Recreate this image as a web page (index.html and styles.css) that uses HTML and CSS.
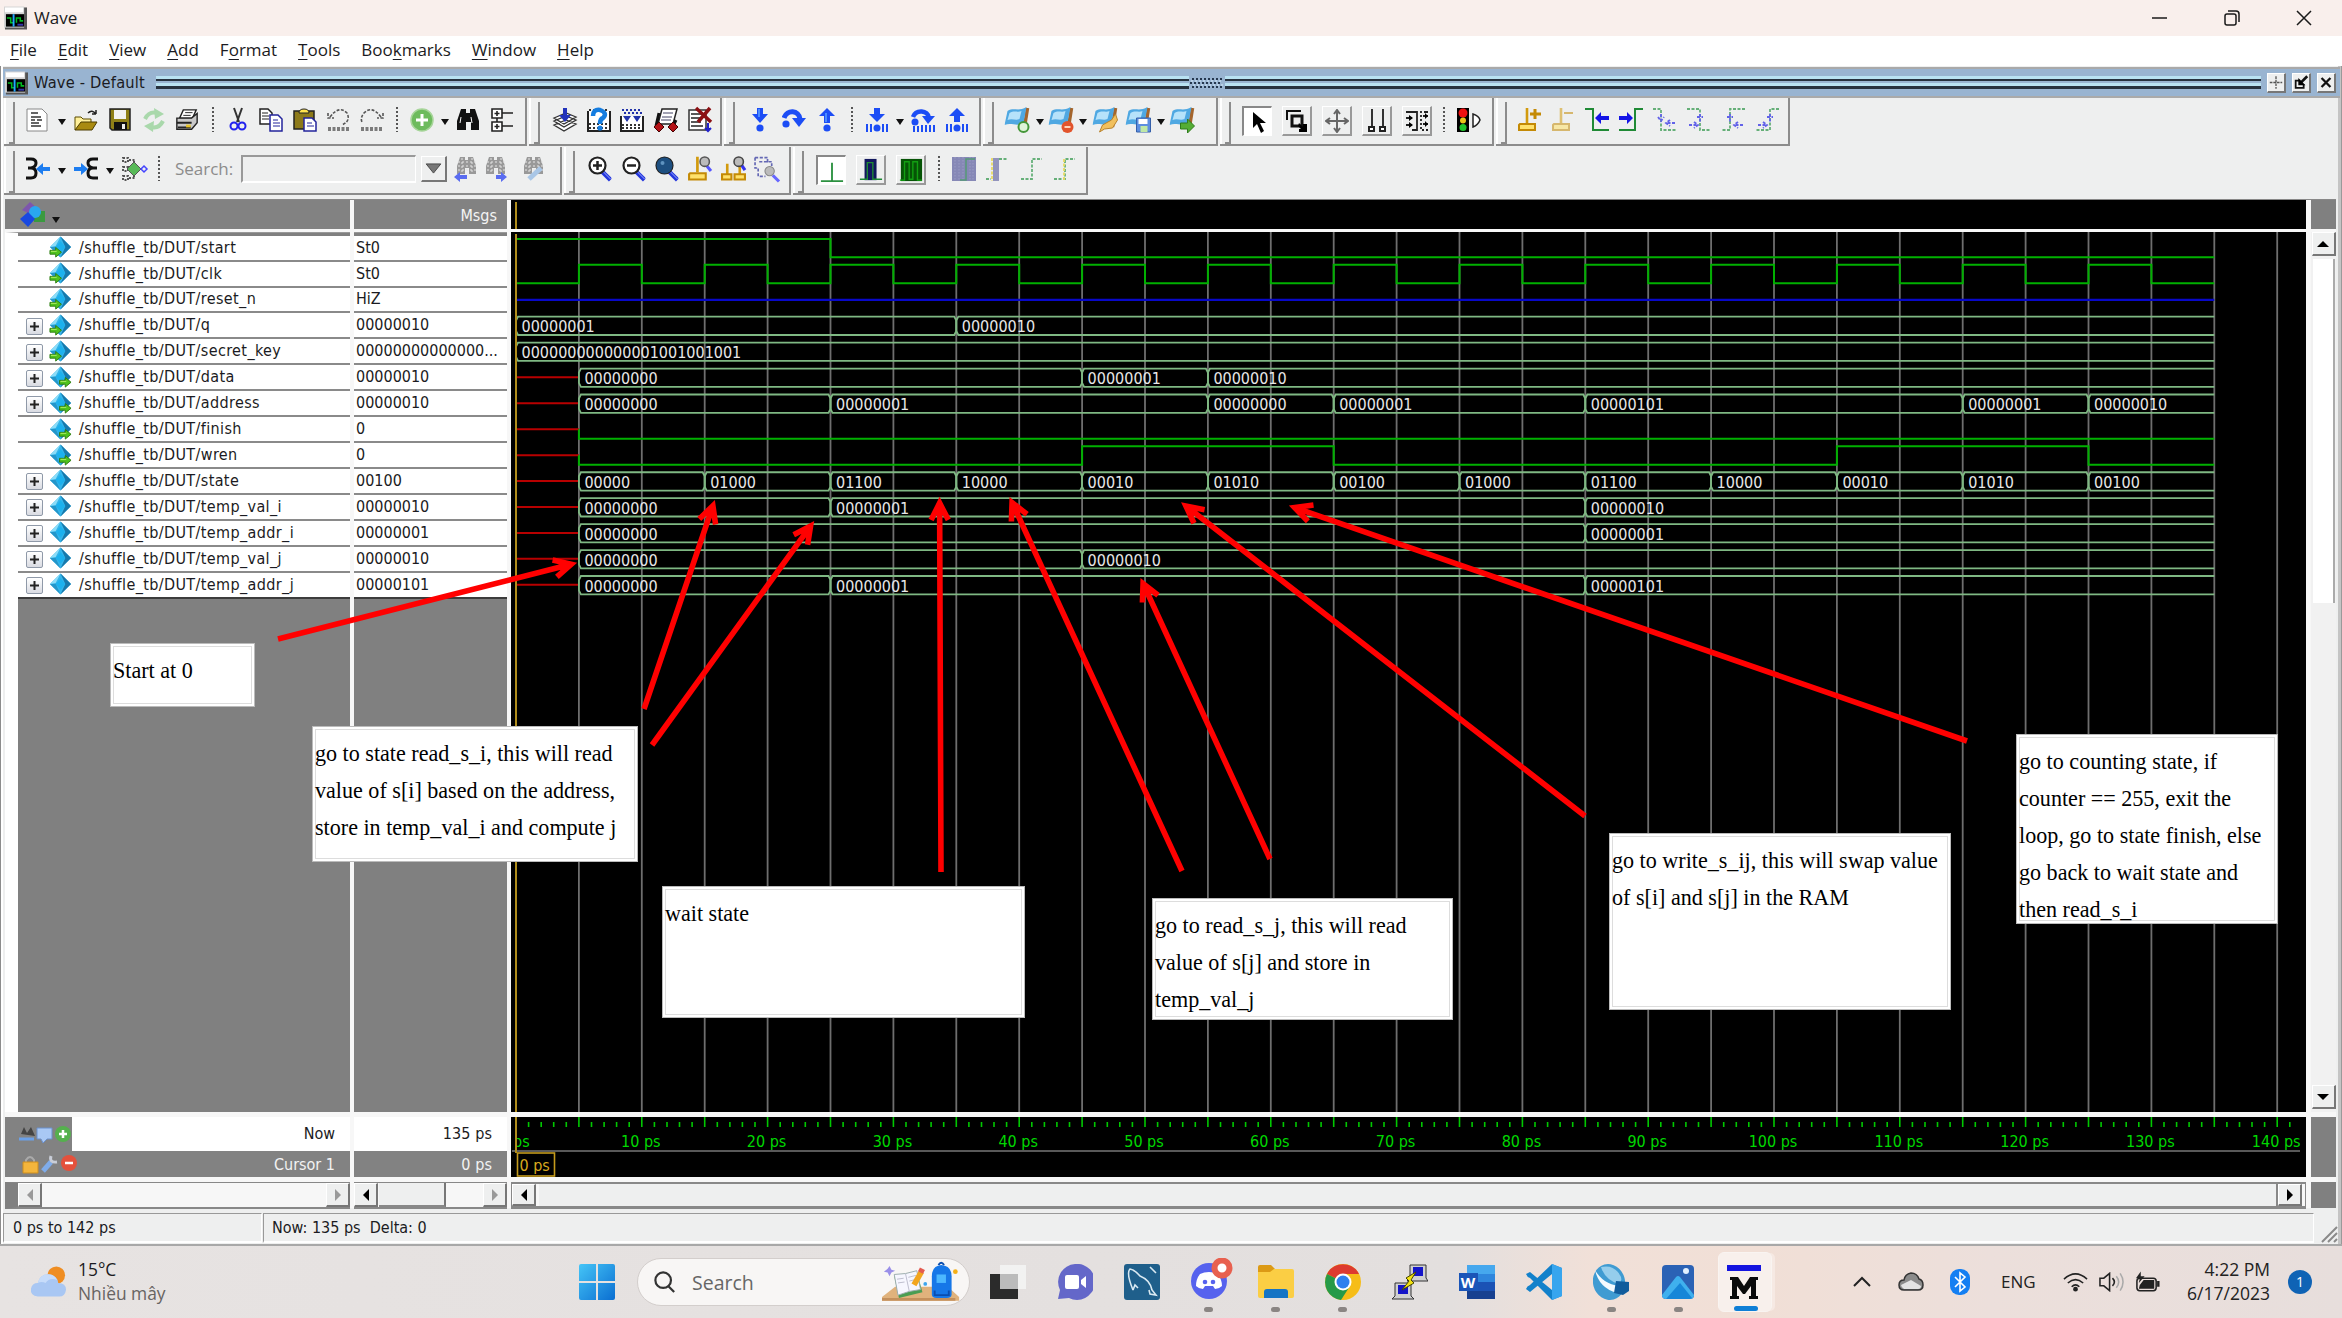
FILE: index.html
```html
<!DOCTYPE html>
<html lang="en">
<head>
<meta charset="utf-8">
<title>Wave</title>
<link rel="stylesheet" href="styles.css">
</head>
<body>
<svg class="defs" aria-hidden="true">
  <symbol id="app" viewBox="0 0 24 24"><path fill="#555" d="M1 1h23v23H1z"/><path fill="#d4d4d4" d="M0 0h21v22H0z"/><path fill="#fff" d="M1 1h19v5H1z"/><path fill="#000" d="M2 8h19v13H2z"/><path d="M3 12h4v5h3M13 17v-5h4v3h3" fill="none" stroke="#0b2" stroke-width="1.6"/><path d="M10 8v13" stroke="#2af" stroke-width="2"/><path d="M14 19h6" stroke="#33a" stroke-width="2"/></symbol>
  <symbol id="caret" viewBox="0 0 10 8"><path fill="#111" d="M1 1h8L5 7z"/></symbol>
  <symbol id="gem" viewBox="0 0 24 24"><path fill="#35b5ea" d="M12 1 1 12l11 11 11-11z"/><path fill="#1779ac" d="m12 1 11 11-11 11 5-11z"/><path fill="#8bdcf8" d="M12 1 1 12l6-1z"/><path fill="#2496ca" d="m1 12 11 11-5-11z"/><path fill="#1cb1ee" d="m12 6 5 6-5 6-5-6z"/></symbol>
  <symbol id="garrow" viewBox="0 0 14 12"><path fill="#4fc21c" stroke="#2d7d12" stroke-width="1" d="M1 4h6V1l6 5-6 5V8H1z"/><path stroke="#b6f06a" d="M2 5h6"/></symbol>
  <symbol id="down" viewBox="0 0 24 24"><path fill="#1c4df5" d="M9 0h6v6h5l-8 9-8-9h5z"/><path fill="#4b8cff" d="M10 1h2v8h-2z"/><circle cx="12" cy="20" r="3.6" fill="#1c4df5"/></symbol>
  <symbol id="up" viewBox="0 0 24 24"><path fill="#1c4df5" d="M12 0l8 8h-5v7H9V8H4z"/><path fill="#4b8cff" d="M10 5h2v9h-2z"/><circle cx="12" cy="20" r="3.6" fill="#1c4df5"/></symbol>
  <symbol id="over" viewBox="0 0 24 24"><path fill="none" stroke="#1c4df5" stroke-width="5" d="M2 10C5 1 17 2 18 11"/><path fill="#1c4df5" d="M10 10h14l-7 9z"/><circle cx="4" cy="16" r="3.6" fill="#1c4df5"/></symbol>
  <symbol id="bars" viewBox="0 0 24 8"><path stroke="#1c4df5" stroke-width="2" d="M2 0v8M6 0v8M18 0v8M22 0v8"/><circle cx="12" cy="4" r="3.5" fill="#1c4df5"/></symbol>
  <symbol id="flag" viewBox="0 0 26 26"><path stroke="#a4652c" stroke-width="3.500" d="m23 1-3 19"/><path fill="#4fa8e2" d="M3 4c6-4 11 1 19-4l-3 16c-7 4-12-1-19 2z"/><path fill="#b6e2fa" d="M5 6c5-3 8 0 12-2l-2 8c-4 2-7-1-12 1z"/></symbol>
  <symbol id="binoc" viewBox="0 0 24 24"><path fill="#111" d="M5 1h5v4h4V1h5l4 12v9h-8v-8h-5v8H1v-9z"/><path stroke="#fff" d="M5 9 4 15M15 9l1 6"/></symbol>
  <symbol id="binocg" viewBox="0 0 24 24"><path fill="#999" d="M6 0h5v3h3V0h5l3 9v8h-7v-6h-4v6H3V9z"/><path stroke="#e5e5e5" stroke-dasharray="2 2" d="M4 5h18M4 9h18M4 13h18M8 1v14M18 1v14"/></symbol>
  <symbol id="lens" viewBox="0 0 24 26"><path stroke="#2436dc" stroke-width="4.5" d="m15 16 8 8"/><path stroke="#98a8ff" d="m16 16 7 7"/><circle cx="10" cy="9.500" r="8" fill="#fff" stroke="#222" stroke-width="2.2"/></symbol>
  <symbol id="anchor" viewBox="0 0 24 24"><path stroke="#d29a0d" stroke-width="2.6" d="M10 0v15"/><path fill="#ffe16a" stroke="#c48a05" stroke-width="2" d="M3 16h15v6H2v-5z"/></symbol>
  <symbol id="lefta" viewBox="0 0 14 14"><path fill="#1414e6" d="M0 7l6-6v4h8v4H6v4z"/></symbol>
</svg>

<div class="window">
  <header class="title"><svg class="appic"><use href="#app"/></svg><span>Wave</span>
    <div class="winbtns">
      <svg viewBox="0 0 16 16"><path d="M0 8h15"/></svg>
      <svg viewBox="0 0 16 16"><rect x="1" y="4" width="11" height="11" rx="2"/><path d="M4 1h8q3 0 3 3v8"/></svg>
      <svg viewBox="0 0 16 16"><path d="m1 1 14 14M15 1 1 15"/></svg>
    </div>
  </header>
  <nav class="menu"><span><u>F</u>ile</span><span><u>E</u>dit</span><span><u>V</u>iew</span><span><u>A</u>dd</span><span>F<u>o</u>rmat</span><span><u>T</u>ools</span><span>Boo<u>k</u>marks</span><span><u>W</u>indow</span><span><u>H</u>elp</span></nav>

  <div class="dock">
    <svg class="appic"><use href="#app"/></svg><span class="docktitle">Wave - Default</span>
    <i class="rails"></i><svg class="grab" viewBox="0 0 34 12"><path stroke="#26384f" stroke-width="2" stroke-dasharray="2 2" d="M2 2h32M0 6h32M2 10h32"/><path stroke="#d8efff" stroke-width="1" stroke-dasharray="2 2" d="M1 4h32M3 8h31"/></svg><i class="rails"></i>
    <div class="dockbtns">
      <svg viewBox="0 0 18 18"><path stroke="#555" stroke-width="1.500" d="M9 2v14M2 9h14" stroke-dasharray="3 1"/></svg>
      <svg viewBox="0 0 18 18"><path fill="none" stroke="#111" stroke-width="2" d="M8 7H3v8h9v-4"/><path stroke="#111" stroke-width="3" d="m16 2-8 8"/><path d="M6 4v8h8z"/></svg>
      <svg viewBox="0 0 18 18"><path stroke="#111" stroke-width="2.600" d="m4 4 10 10M14 4 4 14"/></svg>
    </div>
  </div>

  <div class="toolrow">
    <div class="tb t1">
      <svg class="ic" viewBox="0 0 24 24"><path fill="#fff" stroke="#888" d="M2 1h15l5 5v17H2z"/><path stroke="#333" stroke-width="1.500" d="M6 5h7M6 9h10M6 12h4m2 0h5M6 15h8M6 18h10"/></svg>
      <svg class="ct"><use href="#caret"/></svg>
      <svg class="ic" viewBox="0 0 24 24"><path d="M14 5q4-4 8 1m0 0V2m0 4h-4" fill="none" stroke="#222" stroke-width="1.500"/><path fill="#fff09a" stroke="#5b4a00" d="M1 22V9h6l2 2h8v4"/><path fill="#a98a10" stroke="#4c3c00" d="m1 22 6-8h16l-5 8z"/></svg>
      <svg class="ic" viewBox="0 0 24 24"><path fill="#8f8018" stroke="#222" stroke-width="1.500" d="M2 1h20v21H4l-2-2z"/><path fill="#f2f2f2" d="M6 2h12v9H6z"/><path fill="#111" d="M6 14h13v8H6z"/><path fill="#eee" d="M14 16h3v5h-3z"/></svg>
      <svg class="ic" viewBox="0 0 24 24"><path fill="none" stroke="#a9d8ab" stroke-width="4" d="M3 11q4-8 12-6M21 13q-4 8-12 6"/><path fill="#a9d8ab" d="m12 0 10 6-9 5zM12 13 2 18l9 6z"/></svg>
      <svg class="ic" viewBox="0 0 26 24"><path fill="#fff" stroke="#222" stroke-width="1.500" d="M9 1h14l-4 9H5z"/><path stroke="#222" d="M11 4h8M9 7h8"/><path fill="#c9c9c9" stroke="#222" stroke-width="1.500" d="M2 10h16l6-5v10l-6 7H2z"/><path stroke="#222" stroke-width="2" d="M2 15h16M3 20h14"/><path fill="#e8c42a" d="M12 17h5v3h-5z"/></svg>
      <i class="sp"></i>
      <svg class="ic" viewBox="0 0 24 24"><path stroke="#333" stroke-width="2" d="m8 0 5 14M16 0l-5 14"/><circle cx="8" cy="18" r="3.500" fill="none" stroke="#22e" stroke-width="2"/><circle cx="16" cy="18" r="3.500" fill="none" stroke="#22e" stroke-width="2"/></svg>
      <svg class="ic" viewBox="0 0 24 24"><path fill="#fff" stroke="#222" stroke-width="1.500" d="M1 1h8l4 4v11H1z"/><path stroke="#222" d="M3 5h6M3 8h7M3 11h7"/><path fill="#fff" stroke="#23259c" stroke-width="1.500" d="M11 7h8l4 4v12H11z"/><path stroke="#23259c" d="M14 12h5M14 15h7M14 18h7"/></svg>
      <svg class="ic" viewBox="0 0 24 24"><path fill="#8d7a1a" stroke="#222" stroke-width="1.500" d="M1 3h20v18H1z"/><path fill="#ffe34d" stroke="#222" d="M6 5q0-4 5-4t5 4z"/><path fill="#fff" stroke="#23259c" stroke-width="1.500" d="M11 10h8l4 4v9H11z"/><path stroke="#23259c" d="M14 15h5M14 18h7"/></svg>
      <svg class="ic" viewBox="0 0 24 24"><path fill="none" stroke="#555" stroke-width="1.600" stroke-dasharray="3 1.500" d="M1 5v5h6M3 9Q12-3 20 5q4 8-5 12M1 20h22M1 22h22"/></svg>
      <svg class="ic" viewBox="0 0 24 24"><path fill="none" stroke="#555" stroke-width="1.600" stroke-dasharray="3 1.500" d="M23 5v5h-6M21 9Q12-3 4 5 0 10 2 14M1 20h22M1 22h22"/></svg>
      <i class="sp"></i>
      <svg class="ic" viewBox="0 0 24 24"><circle cx="12" cy="12" r="11" fill="#6dbb5d" stroke="#a7d59a" stroke-width="1.500"/><path stroke="#fff" stroke-width="3" d="M12 6v12M6 12h12"/></svg>
      <svg class="ct near"><use href="#caret"/></svg>
      <svg class="ic"><use href="#binoc"/></svg>
      <svg class="ic" viewBox="0 0 24 24"><path fill="#fff" stroke="#222" stroke-width="1.600" d="M2 1h10v9H2zM2 14h10v9H2z"/><path stroke="#222" stroke-width="1.600" d="M7 3v5M4.500 5.500h5M7 16v5M4.500 18.500h5M12 5h11M12 18h11M7 10v4"/></svg>
    </div>
    <div class="tb t2">
      <svg class="ic" viewBox="0 0 24 24"><path fill="#fff" stroke="#333" stroke-width="1.300" d="m1 17 12-5 10 4-12 7zM1 13l12-5 10 4-12 7zM1 10l12-5 10 4-12 7z"/><path fill="#23b" d="M10 0h4v7h4l-6 7-6-7h4z"/></svg>
      <svg class="ic" viewBox="0 0 24 24"><path fill="#fff" stroke="#222" stroke-width="2" d="M1 3v20h22V3"/><path stroke="#333" stroke-dasharray="2 2" stroke-width="2" d="M2 16h20M2 20h20M2 2h20"/><path fill="none" stroke="#157de0" stroke-width="4.500" d="M6 8q0-7 7-6 8 3 3 8-3 1-3 6"/><circle cx="13" cy="20" r="2.600" fill="#157de0"/></svg>
      <svg class="ic" viewBox="0 0 24 24"><path fill="#fff" stroke="#222" stroke-width="2" d="M1 8v15h22V8"/><path stroke="#333" stroke-dasharray="2 2" stroke-width="2" d="M2 17h20M2 20h20"/><path stroke="#23a" stroke-dasharray="2 2" stroke-width="2" d="M2 2h20M4 5h18"/><path fill="#23a" d="m3 8 4 6 4-6zM13 8l4 6 4-6z"/></svg>
      <svg class="ic" viewBox="0 0 24 24"><path fill="#fff" stroke="#222" stroke-width="1.500" d="M8 1h15l-4 15H4z"/><path stroke="#446" d="M9 5h10M8 9h10M7 12h10"/><path stroke="#111" stroke-width="3" d="M2 18 5 5M18 20l4-8"/><path fill="#b31217" stroke="#400" d="m5 14 5 5-5 5-5-5zM19 14l5 5-5 5-5-5z"/></svg>
      <svg class="ic" viewBox="0 0 24 24"><path fill="#fff" stroke="#333" stroke-width="1.500" d="M1 2h17v20H1z"/><path stroke="#222" stroke-width="1.500" d="M3 6h12M3 10h12M3 14h10M3 18h12"/><path stroke="#8c1013" stroke-width="3.500" d="m8 0 15 14M22 0 10 14"/><path stroke="#22c" stroke-width="2" d="M20 15v8m-3-3 3 3 3-3"/></svg>
    </div>
    <div class="tb t3">
      <svg class="ic"><use href="#down"/></svg><svg class="ic"><use href="#over"/></svg><svg class="ic"><use href="#up"/></svg>
      <i class="sp"></i>
      <svg class="ic" viewBox="0 0 24 24"><path fill="#1c4df5" d="M9 0h6v6h5l-8 8-8-8h5z"/><use href="#bars" y="16" width="24" height="8"/></svg>
      <svg class="ct near"><use href="#caret"/></svg>
      <svg class="ic" viewBox="0 0 24 24"><path fill="none" stroke="#1c4df5" stroke-width="4.500" d="M2 9C5 1 17 2 18 10"/><path fill="#1c4df5" d="M11 8h13l-7 8z"/><circle cx="4" cy="14" r="3.500" fill="#1c4df5"/><path stroke="#1c4df5" stroke-width="2" d="M3 18v6M7 18v6M11 17v7M15 17v7M19 17v7M23 17v7"/></svg>
      <svg class="ic" viewBox="0 0 24 24"><path fill="#1c4df5" d="m12 0 8 8h-5v6H9V8H4z"/><use href="#bars" y="16" width="24" height="8"/></svg>
    </div>
    <div class="tb t4">
      <svg class="ic" viewBox="0 0 26 26"><use href="#flag" width="26" height="26"/><circle cx="19" cy="20" r="5" fill="#dff4d8" stroke="#45973a" stroke-width="2"/></svg><svg class="ct"><use href="#caret"/></svg>
      <svg class="ic" viewBox="0 0 26 26"><use href="#flag" width="26" height="26"/><circle cx="19" cy="20" r="6" fill="#e2542c"/><path stroke="#ffd2b8" stroke-width="2" d="M16 20h6"/></svg><svg class="ct"><use href="#caret"/></svg>
      <svg class="ic" viewBox="0 0 26 26"><use href="#flag" width="26" height="26"/><path fill="#f1c05d" stroke="#b9832e" d="m7 25 3-7 9-5 4-6 2 6-5 8-8 1z"/></svg>
      <svg class="ic" viewBox="0 0 26 26"><use href="#flag" width="26" height="26"/><path fill="#5d8fe0" stroke="#3560aa" d="M11 11h14v14H11z"/><path fill="#fff" d="M13 12h9v5h-9z"/><path fill="#bfe8a6" d="M15 19h7v6h-7z"/></svg><svg class="ct"><use href="#caret"/></svg>
      <svg class="ic" viewBox="0 0 26 26"><use href="#flag" width="26" height="26"/><path fill="#54ad35" stroke="#2f7d1c" d="M11 16h7v-4l7 7-7 7v-4h-7z"/></svg>
    </div>
    <div class="tb t5">
      <span class="bt on"><svg viewBox="0 0 24 24"><path d="M7 2v16l4-4 4 9 3-2-4-8h6z"/></svg></span>
      <span class="bt"><svg viewBox="0 0 24 24"><path fill="none" stroke="#111" stroke-width="2" d="M2 11V2h14"/><path fill="none" stroke="#111" stroke-width="3" d="M7 7h10v10H7z"/><path d="m14 14 4 4v-3h4v8h-8v-3h2l-3-3z"/></svg></span>
      <span class="bt"><svg viewBox="0 0 24 24"><path fill="none" stroke="#666" stroke-width="2" d="M12 2v20M2 12h20M9 5l3-4 3 4M9 19l3 4 3-4M5 9l-4 3 4 3M19 9l4 3-4 3"/></svg></span>
      <span class="bt"><svg viewBox="0 0 24 24"><path stroke="#333" stroke-width="2" d="M7 0v19M18 0v19"/><path fill="#fff" stroke="#222" stroke-width="2" d="M4 18h5v4H4zM15 18h5v4h-5z"/></svg></span>
      <span class="bt"><svg viewBox="0 0 24 24"><path fill="none" stroke="#222" stroke-width="1.800" d="M1 3h11v18H7M23 3h-4"/><path fill="none" stroke="#222" stroke-width="1.800" stroke-dasharray="2 2" d="M16 2v19h7"/><path stroke="#222" stroke-width="2" d="M1 9h6M1 16h6M18 7h5M18 15h5"/><path d="m4 6 4 3-4 3zM4 13l4 3-4 3zM20 4l3 3-3 3zM20 12l3 3-3 3z"/></svg></span>
      <i class="sp"></i>
      <svg class="ic" viewBox="0 0 24 24"><path d="M1 0h12v24H1z"/><circle cx="7" cy="5" r="4.500" fill="#f01010"/><circle cx="7" cy="12.500" r="3" fill="#e9c51c"/><circle cx="7" cy="19.500" r="3.500" fill="#1fc42b"/><path fill="#fff" stroke="#222" stroke-width="1.500" d="M17 6q6 2 7 6-2 5-7 7z"/></svg>
    </div>
    <div class="tb t6">
      <svg class="ic" viewBox="0 0 24 24"><use href="#anchor" width="24" height="24"/><path stroke="#c48a05" stroke-width="3" d="M18 1v10M13 6h11"/></svg>
      <svg class="ic pale" viewBox="0 0 24 24"><use href="#anchor" width="24" height="24"/><path stroke="#c48a05" stroke-width="2" d="M13 5h9"/></svg>
      <svg class="ic" viewBox="0 0 24 24"><path fill="none" stroke="#1f8a35" stroke-width="2" d="M0 1h8v21h16"/><use href="#lefta" x="10" y="3" width="14" height="14"/></svg>
      <svg class="ic" viewBox="0 0 24 24"><path fill="none" stroke="#1f8a35" stroke-width="2" d="M24 1h-8v21H0"/><path fill="#1414e6" d="m14 10-6-6v4H0v4h8v4z"/></svg>
      <svg class="ic dash" viewBox="0 0 24 24"><path d="M0 1h8v21h16"/><path class="b" d="M8 6v6m-3-3 3 4 3-4M22 15h-9m4-3-4 3 4 3"/></svg>
      <svg class="ic dash" viewBox="0 0 24 24"><path d="M0 1h13v21h11"/><path class="b" d="M13 6v8m-3-5h6M2 17h9m-4-3 4 3-4 3"/></svg>
      <svg class="ic dash" viewBox="0 0 24 24"><path d="M24 1H9v21H0"/><path class="b" d="M9 6v8M6 9h6M22 17h-9m4-3-4 3 4 3"/></svg>
      <svg class="ic dash" viewBox="0 0 24 24"><path d="M24 1h-9v21H0"/><path class="b" d="M15 6v8m-3-5h6M3 17h9m-4-3 4 3-4 3"/></svg>
    </div>
  </div>
  <div class="toolrow">
    <div class="tb s1">
      <svg class="ic" viewBox="0 0 24 24"><path fill="none" stroke="#111" stroke-width="3" d="M0 2h5q5 0 5 4t-5 5H2h3q5 0 5 5t-5 5H0"/><path fill="#1d7df0" d="m10 12 7-6v4h7v4h-7v4z"/></svg>
      <svg class="ct"><use href="#caret"/></svg>
      <svg class="ic" viewBox="0 0 24 24"><path fill="none" stroke="#111" stroke-width="3" d="M24 2h-5q-5 0-5 4t5 5h4-4q-5 0-5 5t5 5h5"/><path fill="#1d7df0" d="m14 12-7-6v4H0v4h7v4z"/></svg>
      <svg class="ct"><use href="#caret"/></svg>
      <svg class="ic" viewBox="0 0 24 24"><path stroke="#555" stroke-width="2" stroke-dasharray="2 1.500" fill="none" d="M1 1h5v4H1zM1 10h5v4H1zM1 19h5v4H1zM7 3h6M7 21h6M12 4v16"/><path fill="#57b957" stroke="#555" d="m12 5 7 7-7 7-7-7z"/><path fill="none" stroke="#44f" stroke-width="1.500" d="m22 9 3 3-3 3-3-3z"/></svg>
      <i class="sp"></i>
      <label>Search:</label><span class="field"></span><span class="drop"><svg viewBox="0 0 18 12"><path fill="#777" stroke="#444" d="M1 1h16L9 11z"/></svg></span>
      <svg class="ic a" viewBox="0 0 24 24"><use href="#binocg" width="24" height="24"/><path fill="#5a6cf0" d="m0 20 6-5v3h7v4H6v3z"/></svg>
      <svg class="ic b" viewBox="0 0 24 24"><use href="#binocg" width="24" height="24"/><path fill="#5a6cf0" d="m24 20-6-5v3h-5v4h5v3z"/></svg>
      <svg class="ic c" viewBox="0 0 24 24"><use href="#binocg" width="24" height="24"/><path stroke="#a9c6e6" stroke-width="5" d="m8 22 12-11"/></svg>
    </div>
    <div class="tb s2">
      <svg class="ic" viewBox="0 0 24 26"><use href="#lens" width="24" height="26"/><path stroke="#222" stroke-width="2.500" d="M10 5v9M5.500 9.500h9"/></svg>
      <svg class="ic" viewBox="0 0 24 26"><use href="#lens" width="24" height="26"/><path stroke="#222" stroke-width="2.500" d="M5.500 9.500h9"/></svg>
      <svg class="ic" viewBox="0 0 24 26"><use href="#lens" width="24" height="26"/><circle cx="10" cy="9.500" r="8" fill="#1d4f80"/><circle cx="8" cy="7" r="2" fill="#5f93c0"/></svg>
      <svg class="ic" viewBox="0 0 24 24"><use href="#anchor" width="24" height="24"/><path stroke="#55f" stroke-width="3" d="m19 9 4 5"/><circle cx="17" cy="5" r="4.500" fill="#bbb" stroke="#555" stroke-width="1.500"/></svg>
      <svg class="ic" viewBox="0 0 24 24"><path stroke="#d29a0d" stroke-width="2.500" d="M6 7v10M18 8v9"/><path fill="#ffe16a" stroke="#c48a05" stroke-width="2" d="M1 17h9v5H1zM13 17h10v5H13z"/><path stroke="#33e" stroke-width="3" d="m19 7 4 6"/><circle cx="17" cy="5" r="4.500" fill="#bbb" stroke="#444" stroke-width="1.500"/></svg>
      <svg class="ic" viewBox="0 0 24 24"><path fill="none" stroke="#6468b4" stroke-width="1.600" stroke-dasharray="3 1.500" d="M1 1h12v4h4M1 1v10h3v8h7M5 5h12v4"/><path stroke="#66f" stroke-width="3" d="m18 18 6 6"/><circle cx="15" cy="14" r="4.500" fill="#bbb" stroke="#888"/></svg>
    </div>
    <div class="tb s3">
      <span class="bt on"><svg viewBox="0 0 26 26"><path stroke="#2b9140" stroke-width="2" d="M13 4v20M1 24h24"/></svg></span>
      <span class="bt"><svg viewBox="0 0 26 26"><path fill="#12185e" d="M6 1h13v23H6z"/><path fill="none" stroke="#1f8a35" stroke-width="1.500" d="M1 23h8V5h6v18h10"/></svg></span>
      <span class="bt"><svg viewBox="0 0 26 26"><path fill="#065406" d="M2 1h23v24H2z"/><path fill="none" stroke="#12a012" stroke-width="1.500" d="M1 24h5V4h5v19h4V4h5v20h5"/></svg></span>
      <i class="sp"></i>
      <svg class="ic" viewBox="0 0 24 24"><path fill="#8688b6" d="M0 0h24v24H0z"/><path stroke="#9a9cc4" stroke-dasharray="1.500 1.500" d="M3 0v24M7 0v24M11 0v24M18 0v24M21 0v24"/><path fill="none" stroke="#597" stroke-width="1.500" d="M8 23h6V2h9"/></svg>
      <svg class="ic dash" viewBox="0 0 24 24"><path fill="#8285b5" stroke="none" d="M7 1h6v23H7z"/><path stroke="#e7d84a" d="M6 1v23"/><path d="M0 22h5M13 2h8"/></svg>
      <svg class="ic dash" viewBox="0 0 24 24"><path d="M1 22h11V2h10"/></svg>
      <svg class="ic dash" viewBox="0 0 24 24"><path d="M1 22h11V2h10"/><path stroke="#e7d84a" d="M11 2v21"/></svg>
    </div>
  </div>

  <main class="wave">
    <div class="head names"><svg class="objs" viewBox="0 0 26 26"><path fill="#7d56ad" d="m10 0 7 6-7 6-8-4z"/><path fill="#3a9a3f" d="M14 9h11v11H14z"/><circle cx="15" cy="10" r="6" fill="#29a7ee"/><path fill="#1848e0" d="m8 10 7 7-7 8-8-8z"/></svg><svg class="ct"><use href="#caret"/></svg></div>
    <div class="head msgs">Msgs</div>
    <div class="black"><i class="cursorline"></i></div>
    <div class="grey g1"></div>

    <div class="list" id="names"></div>
    <div class="vals" id="vals"></div>
    <svg class="plot" id="plot" viewBox="511 232 1795 880"></svg>
    <div class="vscroll"><span class="sb"><svg viewBox="0 0 12 12"><path d="M0 9h12L6 3z"/></svg></span><i class="thumb"></i><i class="rest"></i><span class="sb"><svg viewBox="0 0 12 12"><path d="M0 3h12L6 9z"/></svg></span></div>

    <div class="foot">
      <div class="f1"><span class="fi"><svg viewBox="0 0 54 20"><path fill="#444" d="m3 9 3-7 3 6 4-6 4 9z"/><path stroke="#6aa0e8" stroke-width="3" d="M1 14h15"/><path fill="#a9c8f4" stroke="#6b90cc" d="M19 3h15v11h-5l-4 4-2-4h-4z"/><circle cx="45" cy="9" r="8" fill="#55b04e"/><path stroke="#fff" stroke-width="2.500" d="M45 5v8M41 9h8"/></svg></span><b>Now</b></div>
      <div class="f2"><svg viewBox="0 0 56 20"><path fill="none" stroke="#aaa" stroke-width="2" d="M4 9V6q4-6 8 0v3"/><path fill="#f3b53c" stroke="#cf8e1c" d="M1 8h15v11H1z"/><path stroke="#7facea" stroke-width="5" d="m21 17 8-9"/><path fill="none" stroke="#c9ced8" stroke-width="3" d="M29 2q-2 7 6 6"/><circle cx="47" cy="9" r="8" fill="#e4513c"/><path stroke="#fff" stroke-width="2.500" d="M43 9h8"/></svg><b>Cursor 1</b></div>
    </div>
    <div class="foot"><div class="f1 v"><b>135 ps</b></div><div class="f2 v"><b>0 ps</b></div></div>
    <svg class="ruler" id="ruler" viewBox="511 1117 1795 60"></svg>
    <div class="grey g2"></div>

    <div class="hs hs1"><span class="sb dim"><svg viewBox="0 0 12 12"><path d="M9 0v12L3 6z"/></svg></span><i></i><span class="sb dim"><svg viewBox="0 0 12 12"><path d="M3 0v12l6-6z"/></svg></span></div>
    <div class="hs hs2"><span class="sb"><svg viewBox="0 0 12 12"><path d="M9 0v12L3 6z"/></svg></span><em></em><i></i><span class="sb dim"><svg viewBox="0 0 12 12"><path d="M3 0v12l6-6z"/></svg></span></div>
    <div class="hs hs3"><span class="sb"><svg viewBox="0 0 12 12"><path d="M9 0v12L3 6z"/></svg></span><em></em><span class="sb"><svg viewBox="0 0 12 12"><path d="M3 0v12l6-6z"/></svg></span></div>
    <div class="grey"></div>
  </main>

  <footer class="status"><span class="c1">0 ps to 142 ps</span><span class="c2">Now: 135 ps&nbsp; Delta: 0</span><svg viewBox="0 0 18 18"><path stroke="#8a8a8a" stroke-width="2" d="M2 17 17 2M8 17l9-9M14 17l3-3"/></svg></footer>
</div>

<div class="taskbar">
  <div class="weather"><svg viewBox="0 0 38 34"><circle cx="27" cy="10" r="9" fill="#ef8d22"/><path fill="#a9c7f3" d="M8 32q-8-1-7-8 1-6 7-6 2-9 11-9 9 1 10 9 8 0 8 7-1 7-7 7z"/><path fill="#c7dcfa" d="M8 18q2-9 11-9 6 0 9 6-8-3-12 3-4-2-8 0z"/></svg><div><p>15°C</p><p class="g">Nhiều mây</p></div></div>
  <svg class="win" viewBox="0 0 36 36"><defs><linearGradient id="wg" x2="1" y2="1"><stop stop-color="#45c5f7"/><stop offset="1" stop-color="#0a6ed1"/></linearGradient></defs><path fill="url(#wg)" d="M2 0h15v17H0V2q0-2 2-2zM19 0h15q2 0 2 2v15H19zM0 19h17v17H2q-2 0-2-2zM19 19h17v15q0 2-2 2H19z"/></svg>
  <div class="search"><svg class="mag" viewBox="0 0 24 24"><circle cx="10" cy="10" r="8.500"/><path d="m16 17 6 6"/></svg><span>Search</span>
    <svg class="art" viewBox="0 0 84 42"><path fill="#e0b27c" d="M14 26h56l12 11v4H0v-4z"/><path fill="#c4905c" d="M0 38h78v3H0z"/><path fill="#4a9d52" d="m13 15 24-5 6 22-25 6z"/><path fill="#f6f6ff" stroke="#9aa" d="m13 13 12-1 12-3 4 20-12 2-12 4z"/><path stroke="#bbc" d="m25 12 4 19M16 18l7-1M17 22l7-1M28 16l8-2M29 20l8-2"/><path stroke="#f2a51f" stroke-width="6" d="m34 24 8-14"/><path stroke="#e45a50" stroke-width="6" d="m41 11 2-4"/><path fill="#1677e8" d="M53 15q0-11 10-12 11 1 11 12v19q0 4-5 4H58q-5 0-5-4z"/><path fill="none" stroke="#0a4daf" stroke-width="2" d="M60 3q3-5 6 0M56 30v5h15v-5"/><path fill="#4cb8ff" d="M58 13h10v9H58z"/><path fill="#9a8fe8" d="m8 4 2 4 4 1-4 2-2 4-2-4-4-1 4-3z"/><circle cx="78" cy="10" r="2.500" fill="#f5b017"/><circle cx="46" cy="23" r="2" fill="#3da5ee"/></svg></div>
  <div class="apps">
    <span><svg viewBox="0 0 36 36"><path fill="#2b2b2b" d="M0 10h28v25H0z"/><path fill="#f4f4f4" fill-opacity=".88" d="M10 1h26v24H10z"/><path fill="#bbb" d="M10 10h18v15H10z"/></svg></span>
    <span><svg viewBox="0 0 36 36"><path fill="#6467c9" d="M18 0a18 18 0 1 1-6 34l-11 1 2-9A18 18 0 0 1 18 0z"/><rect x="8" y="11" width="14" height="14" rx="2" fill="#fff"/><path fill="#fff" d="m24 16 5-4v12l-5-4z"/></svg></span>
    <span><svg viewBox="0 0 36 36"><rect width="36" height="36" rx="3" fill="#1f5f8b"/><path fill="none" stroke="#d9e9f2" stroke-width="1.600" d="M9 26q-7-17-3-21 5 1 10 7 10 4 12 14l4 5-6-1-1-4M9 26l2-5 3 3M26 3l6 6"/></svg></span>
    <span class="dot"><svg viewBox="0 0 42 40" class="wide"><circle cx="18" cy="22" r="18" fill="#5662ee"/><path fill="#fff" d="M9 15q4-2 9-2t9 2q4 6 4 12-3 3-7 3l-2-3h-8l-2 3q-4 0-7-3 0-7 4-12z"/><circle cx="14" cy="23" r="2.300" fill="#5662ee"/><circle cx="22" cy="23" r="2.300" fill="#5662ee"/><circle cx="31" cy="9" r="7.500" fill="#fff" stroke="#e8604f" stroke-width="6"/></svg></span>
    <span class="dot"><svg viewBox="0 0 36 36"><path fill="#dc9a15" d="M0 3q0-2 2-2h11l4 4v8H0z"/><path fill="#fbce44" d="M0 8h12l4-3h18q2 0 2 2v25q0 2-2 2H2q-2 0-2-2z"/><path fill="#1674c4" d="M6 34v-6q0-3 3-3h18q3 0 3 3v6z"/></svg></span>
    <span class="dot"><svg viewBox="0 0 36 36"><circle cx="18" cy="18" r="18" fill="#f6bd18"/><path fill="#dd3b30" d="M18 18 2 10a18 18 0 0 1 32 0H18z"/><path fill="#269a48" d="M2 10a18 18 0 0 0 14 26l9-14-7-4z"/><circle cx="18" cy="18" r="8.500" fill="#fff"/><circle cx="18" cy="18" r="6.500" fill="#2f80ee"/></svg></span>
    <span><svg viewBox="0 0 36 36"><path fill="#d0d0d0" stroke="#333" d="M18 1h16v13l2 3H15l3-3zM3 19h16v13l3 3H0l3-3z"/><path fill="#1414c8" d="M21 3h10v9H21zM6 21h10v9H6z"/><path fill="#f2e010" stroke="#440" d="m24 8-10 6 3 3-7 9 12-7-3-3z"/></svg></span>
    <span><svg viewBox="0 0 36 36"><path fill="#2f86dd" d="M8 1h28v34H8z"/><path fill="#46a8ee" d="M8 1h28v9H8z"/><path fill="#1b52b5" d="M8 18h28v17H8z"/><path fill="#174090" d="M8 27h28v8H8z"/><path fill="#1a55b8" d="M0 9h19v18H0z"/></svg><b class="wl">W</b></span>
    <span><svg viewBox="0 0 36 36"><path fill="#1281cb" d="m26 0 10 4v28l-10 4L4 14q-3-1-4-4l4-2 22 18V10L4 28l-4-3q1-3 4-4z"/><path fill="#37a5ee" d="m26 0 10 4v28l-10 4z"/></svg></span>
    <span class="dot"><svg viewBox="0 0 36 36"><ellipse cx="16" cy="18" rx="16" ry="18" fill="#3f9bd2" transform="rotate(-15 16 18)"/><path fill="#f4fafe" d="M2 6q8 14 24 16l-2 7Q6 24 2 6z"/><path fill="#95cdec" d="M8 3q14-3 20 10 1 5-2 7Q12 16 8 3z"/><path fill="#115c9c" d="m23 17 13 1v9l-6 4-9-2z"/></svg></span>
    <span class="dot"><svg viewBox="0 0 36 36"><rect x="2" y="1" width="32" height="34" rx="4" fill="#2b62b5"/><path fill="#3fb0ee" d="M2 31 16 13q2-2 4 0l14 18q0 4-4 4H6q-4 0-4-4z"/><path fill="#1686d8" d="M6 35 20 19l12 15-2 1z"/><circle cx="26" cy="7" r="3" fill="#e2f0ff"/></svg></span>
    <span class="cur"><svg viewBox="0 0 36 36"><path fill="#1414e0" d="M0 1h34v6H0z"/><path fill="#0a0a0a" d="M3 13h8l6 9 6-9h8v3h-2v16h2v3h-9v-3h2V22l-6 8h-2l-6-8v10h2v3H3v-3h2V16H3z"/></svg></span>
  </div>
  <div class="tray">
    <svg class="chev" viewBox="0 0 18 12"><path d="m1 10 8-8 8 8"/></svg>
    <svg class="cloud" viewBox="0 0 26 20"><path fill="#8b8b8b" stroke="#333" stroke-width="1.500" d="M6 18q-5 0-5-5t5-5q1-6 7-7 6 0 8 6 4 1 4 6t-5 5z"/><path fill="#e3e3e3" d="M6 17q-3-2-3-4l10-5 10 6q0 3-3 3z"/></svg>
    <svg class="blue" viewBox="0 0 20 26"><rect width="20" height="26" rx="9" fill="#157ff2"/><path fill="none" stroke="#fff" stroke-width="1.600" d="m5 8 10 10-5 4V4l5 4L5 18"/></svg>
    <span class="eng">ENG</span>
    <svg class="wifi" viewBox="0 0 26 20"><path d="M1 7q12-11 24 0M5 11q8-7 16 0M9 15q4-4 8 0"/><circle cx="13" cy="17.500" r="1.700" fill="#222"/></svg>
    <svg class="spk" viewBox="0 0 26 20"><path d="M1 6h4l6-5v18l-6-5H1zM14 6q4 4 0 8"/><path class="l" d="M18 4q5 6 0 12M22 1q6 9 0 18"/></svg>
    <svg class="bat" viewBox="0 0 26 20"><rect x="2" y="6" width="20" height="13" rx="3" fill="none" stroke="#222" stroke-width="1.600"/><path fill="#222" d="M9 8h11v9H4l1-4zM23 9h2.500v6H23zM6-1 1 6h4l-1 5 6-7H6z"/></svg>
    <div class="clock"><p>4:22 PM</p><p>6/17/2023</p></div>
    <span class="badge">1</span>
  </div>
</div>

<svg class="arrows" id="arrows" viewBox="0 0 2342 1318"></svg>
<div class="note n1">Start at 0</div>
<div class="note n2">go to state read_s_i, this will read<br>value of s[i] based on the address,<br>store in temp_val_i and compute j</div>
<div class="note n3">wait state</div>
<div class="note n4">go to read_s_j, this will read<br>value of s[j] and store in<br>temp_val_j</div>
<div class="note n5">go to write_s_ij, this will swap value<br>of s[i] and s[j] in the RAM</div>
<div class="note n6">go to counting state, if<br>counter == 255, exit the<br>loop, go to state finish, else<br>go back to wait state and<br>then read_s_i</div>
<script src="wave.js"></script>
</body>
</html>
```
FILE: styles.css
```css
* { box-sizing: border-box; }
body { margin: 0; width: 2342px; height: 1318px; overflow: hidden; position: relative; background: #eeefef; color: #1b1b22; font: 16px "DejaVu Sans Condensed", "DejaVu Sans", sans-serif; font-stretch: condensed; }
p { margin: 0; }
b { font-weight: normal; }
svg { display: block; flex: none; }
.defs { position: absolute; width: 0; height: 0; }
.window { height: 1246px; display: flex; flex-direction: column; border-bottom: 2px solid #a8a8a8; background: linear-gradient(90deg, #8c8c8c 0 1px, #fff 1px 3px, transparent 3px 2338px, #c4c4c4 2338px 2341px, #999 2341px); }

.title { height: 36px; background: #f9efec; display: flex; align-items: center; padding-left: 4px; font: 17px "Open Sans", sans-serif; flex: none; }
.title span { margin-top: -2px; }
.appic { width: 23px; height: 24px; margin-right: 7px; }
.winbtns { margin: 0 30px 0 auto; display: flex; gap: 56px; }
.winbtns svg { width: 16px; height: 16px; fill: none; stroke: #1a1a1a; stroke-width: 1.5; }
.menu { height: 30px; background: #fff; display: flex; gap: 21px; padding: 1px 0 0 10px; font: 17px/26px "Open Sans", sans-serif; flex: none; }
.menu u { text-underline-offset: 3px; }

.dock { height: 31px; margin: 1px 2px 0 3px; border-top: 2px solid #a9a9a9; border-bottom: 2px solid #aaa; background: #99b4d1; display: flex; align-items: center; flex: none; }
.dock .appic { margin-left: 2px; margin-right: 6px; }
.docktitle { width: 122px; white-space: nowrap; letter-spacing: .2px; font-size: 16.3px; }
.rails { flex: 1 1 0; height: 13px; border-top: 3px solid #b9e2f2; border-bottom: 3px solid #27323f; background: linear-gradient(#27323f 0 2px, #99b4d1 2px 4px, #b9e2f2 4px 7px); }
.rails:first-of-type { flex: 0 0 1033px; }
.grab { width: 34px; height: 12px; margin: 0 1px; }
.dockbtns { display: flex; gap: 6px; margin: 0 4px 0 6px; }
.dockbtns svg { width: 19px; height: 20px; background: #eeefef; border: solid; border-width: 1px 2px 2px 1px; border-color: #fff #777 #777 #fff; }

.toolrow { height: 49px; display: flex; padding-left: 4px; gap: 2px; flex: none; }
.tb { height: 48px; display: flex; align-items: center; padding: 0 0 3px; border: solid #8c8c8c; border-width: 0 2px 2px 0; background: linear-gradient(90deg, #fff 0 2px, transparent 2px); position: relative; flex: none; }
.tb::before { content: ""; position: absolute; left: 5px; top: 4px; width: 4px; height: 40px; border: solid #8c8c8c; border-width: 0 2px 2px 0; }
.ic { width: 24px; height: 24px; margin: 0 4.85px; overflow: visible; }
.ct { width: 10px; height: 8px; margin: 4px 2.7px 0; }
.ct.near { margin: 4px 1px 0 1px; }
.sp { flex: none; width: 2px; height: 25px; margin: 0 7.2px; background: repeating-linear-gradient(#555 0 2px, transparent 2px 4px); }
.t1 { width: 523px; padding-left: 16.500px; }
.t2 { width: 193px; padding-left: 19px; }
.t3 { width: 257px; padding-left: 19px; }
.t4 { width: 235px; padding-left: 18px; }
.t4 .ct { margin: 4px 0 0; }
.t4 .ic { width: 27px; height: 26px; margin: 0 3.35px; }
.t5 { width: 274px; padding-left: 17px; }
.t5 .sp { margin: 0 6px; }
.t6 { width: 294px; padding-left: 16px; }
.t6 .ic { margin: 0 4.98px; }
.bt { flex: none; width: 30px; height: 30px; margin: 3px 5px 0; display: grid; place-items: center; border: solid; border-width: 1px 2px 2px 1px; border-color: #fff #999 #999 #fff; }
.bt svg { width: 24px; height: 24px; }
.bt.on { background: #fff; border-color: #888 #fff #fff #888; border-width: 2px 1px 1px 2px; }
.pale { opacity: .55; }
.dash { fill: none; stroke: #4ea564; stroke-width: 1.8; stroke-dasharray: 3 1.5; opacity: .85; }
.dash .b { stroke: #4a4ae8; }
.s1 { width: 558px; padding-left: 17.5px; }
.s1 .ct { margin: 4px 2px 0; }
.s1 label { width: 66px; color: #8c8c8c; font: 17px "Open Sans", sans-serif; margin-left: 8px; flex: none; }
.field { width: 175px; height: 28px; border: solid; border-width: 2px 1px 2px 2px; border-color: #999 #fff #fff #999; flex: none; }
.drop { width: 26px; height: 26px; margin-left: 5px; display: grid; place-items: center; border: solid; border-width: 1px 2px 2px 1px; border-color: #fff #777 #777 #fff; flex: none; }
.drop svg { width: 17px; height: 11px; }
.s1 .a { margin: 0 0 0 7px; }
.s1 .b { margin: 0 0 0 5.500px; }
.s1 .c { margin: 0 0 0 14px; }
.s2 { width: 227px; padding-left: 19px; }
.s2 .ic { width: 25px; height: 26px; margin: 0 4.2px; }
.s3 { width: 295px; padding-left: 18px; }

.wave { flex: none; margin: 3px 0 0 5px; display: grid; grid-template-columns: 345px 153px 1795px 26px; grid-template-rows: 32px 885px 65px 26px; column-gap: 4px; border-top: 1px solid #888; background: #f7f7f7; width: 2331px; height: 1009px; align-items: start; }
.wave > :nth-child(4n) { margin-left: 1px; }
.head { height: 29px; background: #828282; color: #f4f4f4; }
.names { display: flex; padding: 2px 0 0 15px; }
.objs { width: 26px; height: 26px; }
.names .ct { margin: 14px 5px 0; }
.msgs { text-align: right; padding: 6px 10px 0 0; }
.black { height: 29px; background: #000; padding-left: 4px; }
.cursorline { display: block; width: 2px; height: 27px; margin-top: 2px; background: #b08d1c; }
.grey { height: 26px; background: #808080; }
.g1 { height: 29px; }
.g2 { height: 60px; }
.list, .vals { height: 880px; background: #808080; border-top: 1px solid #999; padding-top: 2.7px; }
.list { border-left: 13px solid #fff; }
.row { height: 25.93px; background: #fff; border-bottom: 2px solid #8a8a8a; display: flex; align-items: center; padding-bottom: 1px; }
.list .row { padding-left: 8px; letter-spacing: .38px; }
.row:last-child { border-bottom-color: #3c3c3c; }
.vals .row { padding-left: 2px; white-space: nowrap; }
.plus { width: 17px; height: 17px; margin-right: 6px; margin-top: 3px; border: 1px solid #8f99a8; border-radius: 2px; background: linear-gradient(#fff, #d9dbe2); display: grid; place-items: center; }
.plus.none { visibility: hidden; }
.plus svg { width: 9px; height: 9px; }
.sig { width: 23px; height: 24px; margin-right: 7px; }
.plot { width: 1795px; height: 880px; background: #000; }
.plot text, .ruler text { font: 16px "DejaVu Sans Condensed", "DejaVu Sans", sans-serif; font-stretch: condensed; }
.vscroll { height: 880px; background: #f1f1f1; display: flex; flex-direction: column; align-items: center; }
.vscroll .thumb { width: 22px; height: 344px; background: #fff; border-right: 2px solid #aaa; margin-top: 3px; }
.vscroll .rest { flex: 1; }
.vscroll .sb:last-child { margin-bottom: 3px; }
.sb { flex: none; width: 24px; height: 24px; background: #eeefef; border: solid; border-width: 1px 2px 2px 1px; border-color: #fff #777 #777 #fff; display: grid; place-items: center; }
.sb svg { width: 12px; height: 12px; }
.sb.dim { fill: #999; }
.foot { height: 60px; }
.f1 { height: 34px; background: #fff; display: flex; align-items: center; padding-right: 15px; padding-bottom: 1px; }
.f2 { height: 26px; background: #828282; color: #f2f2f2; display: flex; align-items: center; padding: 0 15px 0 17px; }
.foot b { margin-left: auto; }
.fi { background: #828282; width: 67px; height: 34px; padding: 8px 0 0 13px; margin-bottom: -1px; }
.fi svg { width: 54px; height: 20px; }
.f2 svg { width: 56px; height: 20px; }
.v { padding-right: 15px; letter-spacing: .1px; }
.ruler { width: 1795px; height: 60px; background: #000; }
.hs { height: 27px; display: flex; border: solid #888; border-width: 1px 0 2px; background: #f7f7f7; }
.hs i { flex: 1; }
.hs1 { border-left: 13px solid #808080; }
.hs2 em { width: 67px; margin-left: 1px; background: #eeefef; border-right: 2px solid #777; border-bottom: 2px solid #888; }
.hs3 { padding-right: 3px; border-width: 2px 1px 3px; }
.hs3 .sb { height: 22px; }
.hs3 em { flex: 1; margin-left: 3px; background: #eeefef; border-right: 2px solid #888; }

.status { height: 30px; margin: 5px 4px 0 3px; display: flex; line-height: 28px; flex: none; }
.status span { border: solid; border-width: 1px 1px 2px 1px; border-color: #999 #fff #fff #999; }
.c1 { width: 259px; padding-left: 9px; }
.c2 { flex: 1; margin-left: 1px; padding-left: 8px; }
.status svg { width: 18px; height: 18px; align-self: flex-end; margin-left: 6px; }

.taskbar { height: 72px; background: linear-gradient(90deg, #e7e3e2 0, #e3dfde 62%, #f1e0d8 68%, #f1dfd6 75%, #ecdfdb 85%, #e7dedc); font: 17.5px "Open Sans", sans-serif; display: flex; align-items: center; }
.weather { width: 579px; padding-left: 30px; display: flex; align-items: center; gap: 11px; line-height: 24px; height: 70px; font-size: 17.4px; flex: none; }
.weather > div { margin-top: -2px; }
.weather svg { width: 37px; height: 34px; }
.weather .g { color: #686462; }
.win { width: 36px; height: 36px; }
.search { width: 333px; height: 48px; margin-left: 22px; border-radius: 24px; background: #f8f6f5; border: 1px solid #d3cecc; display: flex; align-items: center; padding-left: 16px; color: #666; font-size: 19.5px; flex: none; }
.mag { width: 22px; height: 24px; fill: none; stroke: #333; stroke-width: 2.4; margin-right: 16px; }
.art { width: 79px; height: 42px; margin-left: auto; margin-right: 8px; }
.apps { display: flex; margin-left: 4px; }
.apps span { width: 67.1px; height: 60px; display: grid; place-items: center; position: relative; }
.apps svg { width: 36px; height: 36px; }
.apps .wide { width: 42px; height: 42px; margin: -6px 0 0 6px; }
.dot::after, .cur::after { content: ""; position: absolute; left: 29px; bottom: 0; width: 9px; height: 5px; border-radius: 3px; background: #8a8583; }
.cur::after { background: #0f7fd6; width: 24px; }
.apps .cur { width: 54px; margin-left: 6px; border-radius: 6px; background: #f8f0ec; border: 1px solid #f9f4f1; box-shadow: 4px 0 0 -1px #f6e9e3; }
.cur::after { left: 15px; }
.wl { position: absolute; left: 17px; top: 20px; color: #fff; font: bold 15px "Open Sans", sans-serif; }
.tray { margin-left: auto; display: flex; align-items: center; padding-right: 30px; color: #222; }
.tray svg { fill: none; }
.chev { width: 18px; height: 12px; stroke: #222; stroke-width: 2; margin-right: 27px; }
.cloud { width: 26px; height: 20px; margin-right: 26px; }
.blue { width: 20px; height: 26px; margin-right: 31px; }
.eng { width: 62px; font-size: 17px; margin-top: -2px; }
.wifi, .spk { width: 25px; height: 20px; stroke: #222; stroke-width: 1.6; margin-right: 11px; }
.spk .l { stroke: #aaa; }
.bat { width: 25px; height: 20px; overflow: visible; }
.clock { width: 110px; text-align: right; line-height: 24px; margin: -3px 18px 0 0; font-size: 17.5px; }
.badge { width: 24px; height: 24px; border-radius: 50%; background: #0f63b5; color: #fff; font-size: 14px; line-height: 23px; text-align: center; }

.arrows { position: absolute; left: 0; top: 0; width: 2342px; height: 1318px; fill: none; stroke: #f00; stroke-width: 5.6; pointer-events: none; }
.note { position: absolute; background: #fff; border: 1px solid #bbb; box-shadow: inset 0 0 0 2px #fff, inset 0 0 0 3px #ddd; padding: 8px 0 0 2px; font: 22.1px/37px "Liberation Serif", serif; color: #000; white-space: nowrap; }
.n1 { left: 110px; top: 643px; width: 145px; height: 64px; }
.n2 { left: 312px; top: 726px; width: 326px; height: 136px; }
.n3 { left: 662px; top: 886px; width: 363px; height: 132px; }
.n4 { left: 1152px; top: 898px; width: 301px; height: 122px; }
.n5 { left: 1609px; top: 833px; width: 342px; height: 177px; }
.n6 { left: 2016px; top: 734px; width: 262px; height: 190px; }
```
FILE: wave.js
```js
// Signal table: name, direction (in / out / none), current value, trace.
// A bus trace lists [time, value] pairs; a bit trace lists [time, level] pairs.
const Z8 = '00000000', O8 = '00000001', T8 = '00000010', F8 = '00000101';
const clk = [];
for (let t = 0; t < 135; t += 5) clk.push([t, (t / 5) % 2]);
const signals = [
  ['start', 'in', 'St0', 'bit', [[0, 1], [25, 0]]],
  ['clk', 'in', 'St0', 'bit', clk],
  ['reset_n', 'in', 'HiZ', 'hiz', []],
  ['q', 'in', T8, 'bus', [[0, O8], [35, T8]]],
  ['secret_key', 'in', '00000000000000...', 'bus', [[0, '000000000000001001001001']]],
  ['data', 'out', T8, 'bus', [[5, Z8], [45, O8], [55, T8]]],
  ['address', 'out', T8, 'bus', [[5, Z8], [25, O8], [55, Z8], [65, O8], [85, F8], [115, O8], [125, T8]]],
  ['finish', 'out', '0', 'bit', [[5, 0]]],
  ['wren', 'out', '0', 'bit', [[5, 0], [45, 1], [65, 0], [105, 1], [125, 0]]],
  ['state', '', '00100', 'bus', ['00000', '01000', '01100', '10000', '00010', '01010', '00100', '01000', '01100', '10000', '00010', '01010', '00100'].map((v, i) => [5 + 10 * i, v])],
  ['temp_val_i', '', T8, 'bus', [[5, Z8], [25, O8], [85, T8]]],
  ['temp_addr_i', '', O8, 'bus', [[5, Z8], [85, O8]]],
  ['temp_val_j', '', T8, 'bus', [[5, Z8], [45, T8]]],
  ['temp_addr_j', '', F8, 'bus', [[5, Z8], [25, O8], [85, F8]]]
];
const END = 135;
const X = t => +(516 + 12.58 * t).toFixed(1);

let names = '', vals = '', plot = '';
for (let t = 5; t <= 140; t += 5) plot += `<path stroke="#6e6e6e" stroke-width="1.8" d="M${X(t)} 232V1112"/>`;

signals.forEach(([name, dir, value, kind, trace], i) => {
  const arrow = dir ? `<use href="#garrow" x="${dir === 'in' ? 0 : 10}" y="11" width="14" height="13"/>` : '';
  names += `<div class="row"><span class="plus${kind === 'bus' ? '' : ' none'}"><svg viewBox="0 0 9 9"><path stroke="#222" stroke-width="2" d="M4.500 0v9M0 4.500h9"/></svg></span><svg class="sig" viewBox="0 0 24 24"><use href="#gem" width="24" height="24"/>${arrow}</svg>/shuffle_tb/DUT/${name}</div>`;
  vals += `<div class="row">${value}</div>`;

  const top = 235.7 + 25.93 * i, hi = top + 3.2, lo = top + 21.5, mid = top + 12;
  if (kind === 'hiz') {
    plot += `<path stroke="#0808c8" stroke-width="2.2" d="M${X(0)} ${top + 12.4}H${X(END)}"/>`;
    return;
  }
  if (trace[0][0] > 0) plot += `<path stroke="#b80000" stroke-width="2" d="M${X(0)} ${mid}H${X(trace[0][0])}"/>`;
  if (kind === 'bit') {
    let d = trace[0][0] > 0 ? `M${X(trace[0][0])} ${mid}` : `M${X(0)} ${trace[0][1] ? hi : lo}`;
    trace.forEach(([t, v]) => { d += `H${X(t)}V${v ? hi : lo}`; });
    plot += `<path fill="none" stroke="#00b000" stroke-width="2" d="${d}H${X(END)}"/>`;
    return;
  }
  trace.forEach(([t, v], k) => {
    const x0 = X(t), last = k === trace.length - 1, x1 = X(last ? END : trace[k + 1][0]);
    const close = last ? `H${x1}M${x1} ${lo}` : `H${x1 - 2}L${x1} ${hi + 4}V${lo - 4}L${x1 - 2} ${lo}`;
    plot += `<path fill="none" stroke="#7fb883" stroke-width="1.8" d="M${x0} ${mid}V${hi + 4}L${x0 + 2} ${hi}${close}H${x0 + 2}L${x0} ${lo - 4}V${mid}"/>`;
    plot += `<text x="${x0 + 5.5}" y="${mid + 6.800}" fill="#e8e8e8">${v}</text>`;
  });
});
plot += `<path stroke="#b08d1c" stroke-width="2" d="M516 234V1112"/>`;

let ruler = '<path stroke="#777" stroke-width="1.500" d="M512 1151H2300"/>';
for (let t = 1; t <= 141; t++) ruler += `<path stroke="#00c800" stroke-width="1.600" d="M${X(t)} ${t % 5 ? 1122 : 1117}V1127"/>`;
for (let t = 10; t <= 140; t += 10) ruler += `<text x="${X(t) - 1}" y="1147" text-anchor="middle" fill="#00d800">${t} ps</text>`;
ruler += '<svg x="516" y="1130" width="30" height="24"><text x="-3" y="17" fill="#00d800">ps</text></svg>';
ruler += '<path stroke="#b08d1c" stroke-width="2" d="M516 1117v36"/><rect x="517.500" y="1153" width="37" height="23" fill="none" stroke="#c49a1c" stroke-width="1.600"/><text x="519.500" y="1171" fill="#d8a81e">0 ps</text>';

document.getElementById('names').innerHTML = names;
document.getElementById('vals').innerHTML = vals;
document.getElementById('plot').innerHTML = plot;
document.getElementById('ruler').innerHTML = ruler;

// Annotation arrows: tail x, y, then tip x, y. The joint sits behind the tip by the miter length.
const arrows = [
  [278, 639, 576, 563], [644, 709, 714.5, 501], [652, 745, 813.5, 522], [941, 872, 939.6, 498],
  [1182, 871, 1010, 498], [1270, 859, 1141, 579], [1585, 816, 1182, 503], [1967, 741, 1290, 506]
];
document.getElementById('arrows').innerHTML = arrows.map(([x0, y0, tx, ty]) => {
  const a = Math.atan2(y0 - ty, x0 - tx);
  const x1 = tx + 5 * Math.cos(a), y1 = ty + 5 * Math.sin(a);
  const arm = s => `${(x1 + 19 * Math.cos(a + s)).toFixed(1)} ${(y1 + 19 * Math.sin(a + s)).toFixed(1)}`;
  return `<path d="M${x0} ${y0}L${x1} ${y1}M${arm(0.47)}L${x1} ${y1}L${arm(-0.47)}"/>`;
}).join('');
```
